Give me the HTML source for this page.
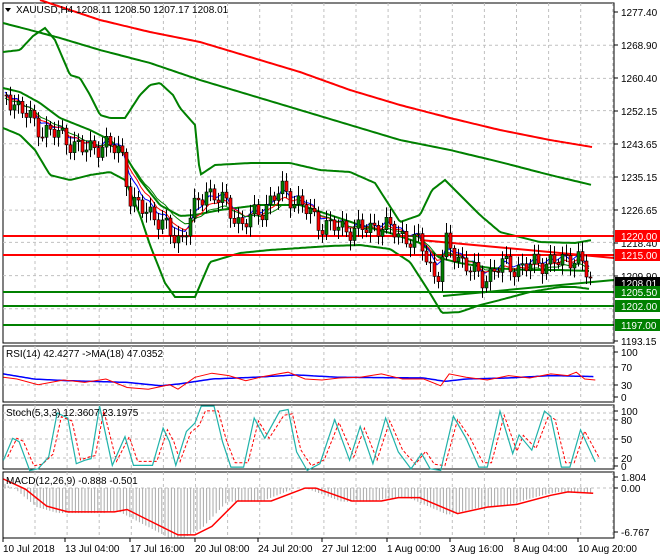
<!DOCTYPE html><html><head><meta charset="utf-8"><style>
html,body{margin:0;padding:0;background:#fff}
svg{display:block;font-family:"Liberation Sans",sans-serif}
</style></head><body>
<svg id="s" width="660" height="560" xmlns="http://www.w3.org/2000/svg">
<rect width="660" height="560" fill="#fff"/>
</svg>
<script>
const S=document.getElementById('s');let h='';
function add(x){h+=x}
function pl(pts,c,w,extra){add(`<polyline fill="none" stroke="${c}" stroke-width="${w}" ${extra||''} points="${pts.map(p=>p[0].toFixed(1)+','+p[1].toFixed(1)).join(' ')}"/>`)}
function interp(k,x){for(let i=0;i<k.length-1;i++){if(x>=k[i][0]&&x<=k[i+1][0]){const t=(x-k[i][0])/(k[i+1][0]-k[i][0]);return k[i][1]+t*(k[i+1][1]-k[i][1]);}}return x<k[0][0]?k[0][1]:k[k.length-1][1];}
function sm(k,step){const r=[];for(let x=k[0][0];x<=k[k.length-1][0];x+=step)r.push([x,interp(k,x)]);return r;}
const R=614;
[[3,343],[346,402],[405,469],[472,538]].forEach(p=>{add(`<rect x="3" y="${p[0]}" width="${R-3}" height="${p[1]-p[0]}" fill="none" stroke="#000" stroke-width="1"/>`)});
for(let x=35;x<R;x+=32.1){[[3,343],[346,402],[405,469],[472,538]].forEach(p=>add(`<line x1="${x}" y1="${p[0]}" x2="${x}" y2="${p[1]}" stroke="#c0c0c0" stroke-dasharray="3,3"/>`))}
const py=p=>12+(1277.4-p)*3.905;
[1268.9,1260.4,1252.15,1243.65,1235.15,1226.65,1218.4,1209.9,1201.4].forEach(p=>add(`<line x1="3" x2="${R}" y1="${py(p)}" y2="${py(p)}" stroke="#c0c0c0" stroke-dasharray="3,3"/>`));
[367,385].forEach(y=>add(`<line x1="3" x2="${R}" y1="${y}" y2="${y}" stroke="#c0c0c0" stroke-dasharray="3,3"/>`));
[413,420,439,458].forEach(y=>add(`<line x1="3" x2="${R}" y1="${y}" y2="${y}" stroke="#c0c0c0" stroke-dasharray="3,3"/>`));
add(`<line x1="3" x2="${R}" y1="488" y2="488" stroke="#c0c0c0" stroke-dasharray="3,3"/>`);
pl(sm([[3,23],[30,30],[60,38],[100,50],[150,63],[200,80],[250,95],[300,110],[350,125],[400,140],[450,150],[500,162],[550,175],[592,185]],2),'#008000',2);
pl(sm([[40,0],[100,20],[150,32],[200,42],[250,57],[300,72],[350,90],[400,105],[450,118],[500,130],[550,140],[592,147]],2),'#ff0000',2);
pl(sm([[3,52],[20,50],[33,36],[45,28],[55,40],[70,75],[80,78],[90,95],[100,115],[110,118],[125,118],[140,95],[150,85],[160,83],[173,95],[180,108],[195,125],[200,175],[215,165],[250,163],[290,163],[320,170],[350,172],[375,183],[400,222],[420,215],[432,190],[445,180],[460,195],[480,215],[500,232],[540,242],[575,243],[592,240]],2),'#008000',2);
pl(sm([[3,128],[20,135],[35,150],[50,175],[70,180],[90,175],[110,172],[125,180],[140,215],[150,245],[165,283],[175,297],[195,297],[210,262],[240,253],[270,250],[300,248],[330,246],[360,245],[390,249],[410,262],[428,290],[442,313],[460,312],[480,305],[500,300],[530,292],[560,287],[575,287],[590,289]],2),'#008000',2);
pl(sm([[3,88],[20,92],[40,103],[60,118],[90,130],[110,140],[125,155],[140,180],[160,205],[180,216],[195,215],[220,210],[260,205],[300,205],[330,215],[360,225],[390,233],[420,243],[440,258],[460,263],[490,268],[530,270],[560,270],[590,271]],2),'#008000',2);
add(`<line x1="3" x2="${R}" y1="236" y2="236" stroke="#ff0000" stroke-width="2"/><line x1="3" x2="${R}" y1="255" y2="255" stroke="#ff0000" stroke-width="2"/>`);
[292,306,325].forEach(y=>add(`<line x1="3" x2="${R}" y1="${y}" y2="${y}" stroke="#008000" stroke-width="2"/>`));
add(`<line x1="420" y1="240" x2="${R}" y2="258" stroke="#ff0000" stroke-width="2"/><line x1="443" y1="296" x2="${R}" y2="280" stroke="#008000" stroke-width="2"/>`);
const ck=[[5,95],[20,110],[40,130],[60,135],[80,150],[100,145],[120,150],[130,205],[150,212],[170,235],[180,240],[190,215],[205,190],[220,200],[240,225],[260,210],[280,190],[300,205],[320,225],[340,228],[360,230],[380,225],[400,235],[420,245],[435,280],[445,245],[460,260],[480,280],[500,265],[520,268],[540,262],[560,262],[575,255],[590,282]];
let closes=[],prev=95;const cs=[];
for(let i=0;i<147;i++){const x=5+4*i;let c=interp(ck,x)+Math.sin(i*1.7)*8+Math.sin(i*0.9)*4;const o=prev;cs.push([x,o,c]);closes.push(c);prev=c;}
function ema(a,n){const k=2/(n+1);let e=a[0];return a.map(v=>e=e+(v-e)*k)}
[[ema(closes,5),'#0000ff'],[ema(closes,8),'#ff0000'],[ema(closes,13),'#008000']].forEach(m=>pl(m[0].map((v,i)=>[5+4*i,v+(m[1]=='#0000ff'?-3:m[1]=='#008000'?3:0)]),m[1],1));
cs.forEach((c,i)=>{const [x,o,cl]=c;const hi=Math.min(o,cl)-3-Math.abs(Math.sin(i*2.3))*7,lo=Math.max(o,cl)+3+Math.abs(Math.cos(i*1.9))*7;
add(`<line x1="${x+1.5}" x2="${x+1.5}" y1="${hi}" y2="${lo}" stroke="#000"/>`);
const col=cl<o?'#008000':'#ff0000';add(`<rect x="${x}" y="${Math.min(o,cl)}" width="3" height="${Math.max(1,Math.abs(o-cl))}" fill="${col}" stroke="#000" stroke-width="0.6"/>`)});
add(`<rect x="${R+1}" y="0" width="${660-R}" height="560" fill="#fff"/>`);
add(`<line x1="${R}" y1="3" x2="${R}" y2="343" stroke="#000"/>`);
const lab=(y,t)=>add(`<line x1="${R}" x2="${R+4}" y1="${y}" y2="${y}" stroke="#000"/><text x="${R+7}" y="${y+4}" font-size="10">${t}</text>`);
[['1277.40',12],['1268.90',45],['1260.40',78],['1252.15',111],['1243.65',144],['1235.15',177],['1226.65',210],['1218.40',243],['1209.90',276],['1193.15',341]].forEach(a=>lab(a[1],a[0]));
const box=(y,t,bg)=>add(`<rect x="${R+1}" y="${y-6}" width="45" height="12" fill="${bg}"/><text x="${R+7}" y="${y+4}" font-size="10" fill="#fff">${t}</text>`);
box(236,'1220.00','#ff0000');box(255,'1215.00','#ff0000');box(283,'1208.01','#000');box(292,'1205.50','#008000');box(306,'1202.00','#008000');box(325,'1197.00','#008000');
[['100',352],['70',367],['30',385],['0',397]].forEach(a=>lab(a[1],a[0]));
[['100',411],['80',420],['50',439],['20',458],['0',466]].forEach(a=>lab(a[1],a[0]));
[['1.804',477],['0.00',488],['-6.767',532]].forEach(a=>lab(a[1],a[0]));
const Z=p=>p.map(q=>[q[0]/2.36,q[1]/2.95+340]);
pl(sm(Z([[8,100],[80,115],[160,120],[300,125],[380,135],[420,130],[500,115],[600,110],[700,103],[800,110],[1000,112],[1050,122],[1100,115],[1200,112],[1300,105],[1405,108]]),2),'#0000ff',1.5);
pl(Z([[8,110],[40,115],[90,132],[150,118],[200,125],[250,115],[300,140],[350,145],[400,132],[420,145],[460,110],[500,98],[540,105],[580,120],[620,108],[680,95],[720,115],[760,118],[800,112],[850,110],[900,100],[950,115],[1000,115],[1040,135],[1060,100],[1100,110],[1150,118],[1200,105],[1250,112],[1300,100],[1340,105],[1360,95],[1380,115],[1405,118]]),'#ff0000',1);
const st=[[8,355],[30,290],[45,300],[70,385],[90,380],[115,345],[135,215],[160,230],[180,365],[200,355],[215,350],[235,195],[265,370],[295,285],[315,370],[340,370],[360,370],[385,260],[400,300],[415,370],[440,270],[460,245],[475,195],[505,195],[525,300],[545,375],[575,375],[600,230],[625,290],[660,210],[680,205],[700,330],[725,385],[755,365],[790,235],[825,355],[850,255],[880,365],[910,230],[940,330],[970,380],[995,335],[1015,380],[1040,385],[1070,225],[1100,290],[1130,375],[1150,375],[1180,210],[1210,335],[1225,280],[1255,325],[1285,210],[1300,225],[1325,375],[1345,375],[1370,265],[1405,360]];
pl(Z(st.map(p=>[p[0]+10,p[1]+(290-p[1])*0.15])),'#ff0000',1,'stroke-dasharray="3,2"');
pl(Z(st),'#20b2aa',1.2);
const mk=[[8,410],[60,440],[110,490],[160,507],[270,507],[300,500],[340,525],[420,575],[460,575],[500,550],[560,475],[640,475],[720,437],[745,437],[830,475],[900,475],[940,465],[990,465],[1080,512],[1150,493],[1220,485],[1300,458],[1340,448],[1400,452]];
const mz=Z(mk);
for(let x=5;x<592;x+=3.2){let v=interp(mz,x+10)-488;v=v*1.05;add(`<line x1="${x}" x2="${x}" y1="488" y2="${488+v}" stroke="#a9a9a9" stroke-width="1"/>`)}
pl(mz,'#ff0000',1.5);
add(`<path d="M5 8 L11 8 L8 12 Z" fill="#000"/><text x="16" y="13" font-size="10">XAUUSD,H4  1208.11 1208.50 1207.17 1208.01</text>`);
add(`<text x="6" y="357" font-size="10">RSI(14) 42.4277  -&gt;MA(18) 47.0352</text>`);
add(`<text x="6" y="416" font-size="10">Stoch(5,3,3) 12.3607 23.1975</text>`);
add(`<text x="6" y="484" font-size="10">MACD(12,26,9) -0.888 -0.501</text>`);
[['10 Jul 2018',3],['13 Jul 04:00',65],['17 Jul 16:00',130],['20 Jul 08:00',195],['24 Jul 20:00',258],['27 Jul 12:00',322],['1 Aug 00:00',387],['3 Aug 16:00',450],['8 Aug 04:00',514],['10 Aug 20:00',578]].forEach(a=>add(`<line x1="${a[1]}" x2="${a[1]}" y1="538" y2="542" stroke="#000"/><text x="${a[1]}" y="552" font-size="10">${a[0]}</text>`));
S.innerHTML+=h;
</script>
</body></html>
